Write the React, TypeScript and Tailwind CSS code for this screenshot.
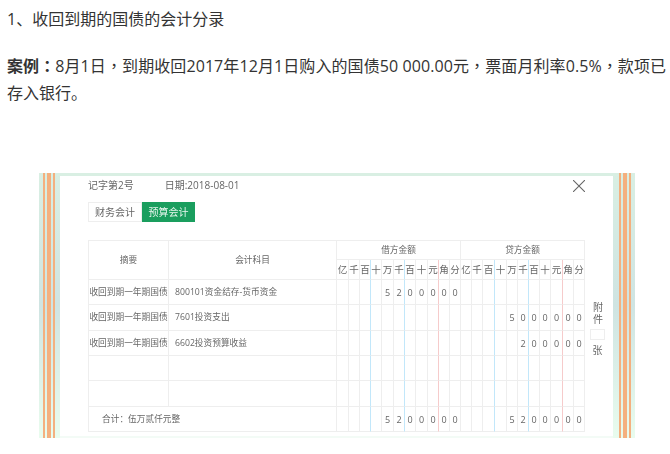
const sansFont = '"Open Sans", "Noto Sans CJK SC", sans-serif';
const punctFont = '"Noto Sans CJK TC", sans-serif';

const units = ["亿", "千", "百", "十", "万", "千", "百", "十", "元", "角", "分"];
const debitCols = ["w-[12px]", "w-[11px]", "w-[11px]", "w-[11px]", "w-[12px]", "w-[11px]", "w-[11px]", "w-[12px]", "w-[11px]", "w-[11px]", "w-[11px]"];
const creditCols = ["w-[11px]", "w-[11px]", "w-[12px]", "w-[12px]", "w-[11px]", "w-[11px]", "w-[11px]", "w-[11px]", "w-[12px]", "w-[11px]", "w-[11px]"];

// 11 digit cells, keyed from the left of the debit / credit block
const rows = [
  { memo: "收回到期一年期国债", account: "800101资金结存-货币资金", debit: "    5200000", credit: "", height: "h-[25px]" },
  { memo: "收回到期一年期国债", account: "7601投资支出", debit: "", credit: "    5000000", height: "h-[26px]" },
  { memo: "收回到期一年期国债", account: "6602投资预算收益", debit: "", credit: "     200000", height: "h-[25px]" },
  { memo: "", account: "", debit: "", credit: "", height: "h-[25px]" },
  { memo: "", account: "", debit: "", credit: "", height: "h-[26px]" },
];

const cellBorder = (i: number) => {
  if (i === 2 || i === 5) return "border-r-[#c2e7fa]";
  if (i === 8) return "border-r-[#f6cbcb]";
  return "border-r-[#eeeeee]";
};

const Digits = ({ value }: { value: string }) => (
  <>
    {units.map((_, i) => (
      <td
        key={i}
        className={`border-b border-r border-b-[#eeeeee] p-0 text-center text-[9px] ${cellBorder(i)}`}
      >
        {(value[i] ?? "").trim()}
      </td>
    ))}
  </>
);

const Stripes = ({ flip }: { flip?: boolean }) => (
  <div
    className={`flex h-full shrink-0 bg-gradient-to-b from-[#d9efe3] via-[#cfe4e2] to-[#e9fcee] ${
      flip ? "w-[22px] flex-row-reverse" : "w-[21px]"
    }`}
  >
    <div className="w-[4px]" />
    <div className="w-[2px] bg-[#f4b07f]" />
    <div className="w-[2px]" />
    <div className="w-[4px] bg-[#f4b07f]" />
    <div className="w-[2px]" />
    <div className="w-[2px] bg-[#f4b07f]" />
  </div>
);

const App = () => {
  return (
    <div
      className="h-[454px] w-[670px] overflow-hidden bg-white pt-[6px] pl-[7px] text-[16px] leading-[27px] text-[#333333]"
      style={{ fontFamily: sansFont }}
    >
      <p>1、收回到期的国债的会计分录</p>
      <p className="mt-[19px] tracking-[0.09px] whitespace-nowrap">
        <b>
          案例<span style={{ fontFamily: punctFont }}>：</span>
        </b>
        8月1日<span style={{ fontFamily: punctFont }}>，</span>到期收回2017年12月1日购入的国债50 000.00元
        <span style={{ fontFamily: punctFont }}>，</span>票面月利率0.5%
        <span style={{ fontFamily: punctFont }}>，</span>款项已
      </p>
      <p>存入银行。</p>

      <div className="mt-[66px] ml-[32px] flex h-[265px] w-[596px] blur-[0.35px]">
        <Stripes />
        <div className="flex min-w-0 flex-1 flex-col border-t-[3px] border-b-2 border-t-[#d9efe3] border-b-[#f3fbf6] bg-white pl-[28px] text-[#666666]">
          <div className="flex h-[18px] items-center text-[10px] leading-none">
            <span>记字第2号</span>
            <span className="ml-[31px]">日期:2018-08-01</span>
            <svg viewBox="0 0 12 12" className="mt-[1px] mr-[28px] ml-auto h-[12px] w-[12px]" fill="none" stroke="#666666" strokeWidth="1.1">
              <path d="M0 0 12 12M12 0 0 12" />
            </svg>
          </div>

          <div className="mt-[8px] flex h-[20px] text-[10px] leading-none">
            <div className="flex w-[54px] items-center justify-center border border-[#eeeeee]">财务会计</div>
            <div className="flex w-[53px] items-center justify-center bg-[#1a9e5e] text-[#e8f6ee]">预算会计</div>
          </div>

          <div className="mt-[18px] flex">
            <table className="w-[497px] shrink-0 table-fixed border-separate border-spacing-0 border-t border-l border-[#eeeeee] text-[8.7px] leading-none">
              <colgroup>
                <col className="w-[80px]" />
                <col className="w-[168px]" />
                {[...debitCols, ...creditCols].map((width, i) => (
                  <col key={i} className={width} />
                ))}
              </colgroup>
              <tbody>
                <tr className="h-[19px]">
                  <td rowSpan={2} className="border-r border-b border-[#eeeeee] p-0 text-center">摘要</td>
                  <td rowSpan={2} className="border-r border-b border-[#eeeeee] p-0 text-center">会计科目</td>
                  <td colSpan={11} className="border-r border-b border-[#eeeeee] p-0 text-center">借方金额</td>
                  <td colSpan={11} className="border-r border-b border-[#eeeeee] p-0 text-center">贷方金额</td>
                </tr>
                <tr className="h-[20px] text-[9.5px]">
                  {[...units, ...units].map((unit, i) => (
                    <td
                      key={i}
                      className={`border-b border-r border-b-[#eeeeee] p-0 text-center ${cellBorder(i % 11)}`}
                    >
                      {unit}
                    </td>
                  ))}
                </tr>
                {rows.map((row, i) => (
                  <tr key={i} className={row.height}>
                    <td className="overflow-hidden border-r border-b border-[#eeeeee] p-0 text-center whitespace-nowrap">{row.memo}</td>
                    <td className="border-r border-b border-[#eeeeee] p-0 pl-[6px]">{row.account}</td>
                    <Digits value={row.debit} />
                    <Digits value={row.credit} />
                  </tr>
                ))}
                <tr className="h-[25px]">
                  <td colSpan={2} className="border-r border-b border-[#eeeeee] p-0 pl-[13px]">合计：伍万贰仟元整</td>
                  <Digits value="    5200000" />
                  <Digits value="    5200000" />
                </tr>
              </tbody>
            </table>

            <div className="ml-[5px] flex w-[15px] flex-col items-center pt-[62px] text-[10px] leading-[12px]">
              <span className="tracking-[2px] [writing-mode:vertical-rl]">附件</span>
              <div className="mt-[3px] h-[11px] w-[15px] border border-[#eeeeee]" />
              <span className="mt-[5px] leading-[10px]">张</span>
            </div>
          </div>
        </div>
        <Stripes flip />
      </div>
    </div>
  );
};

export default App;
